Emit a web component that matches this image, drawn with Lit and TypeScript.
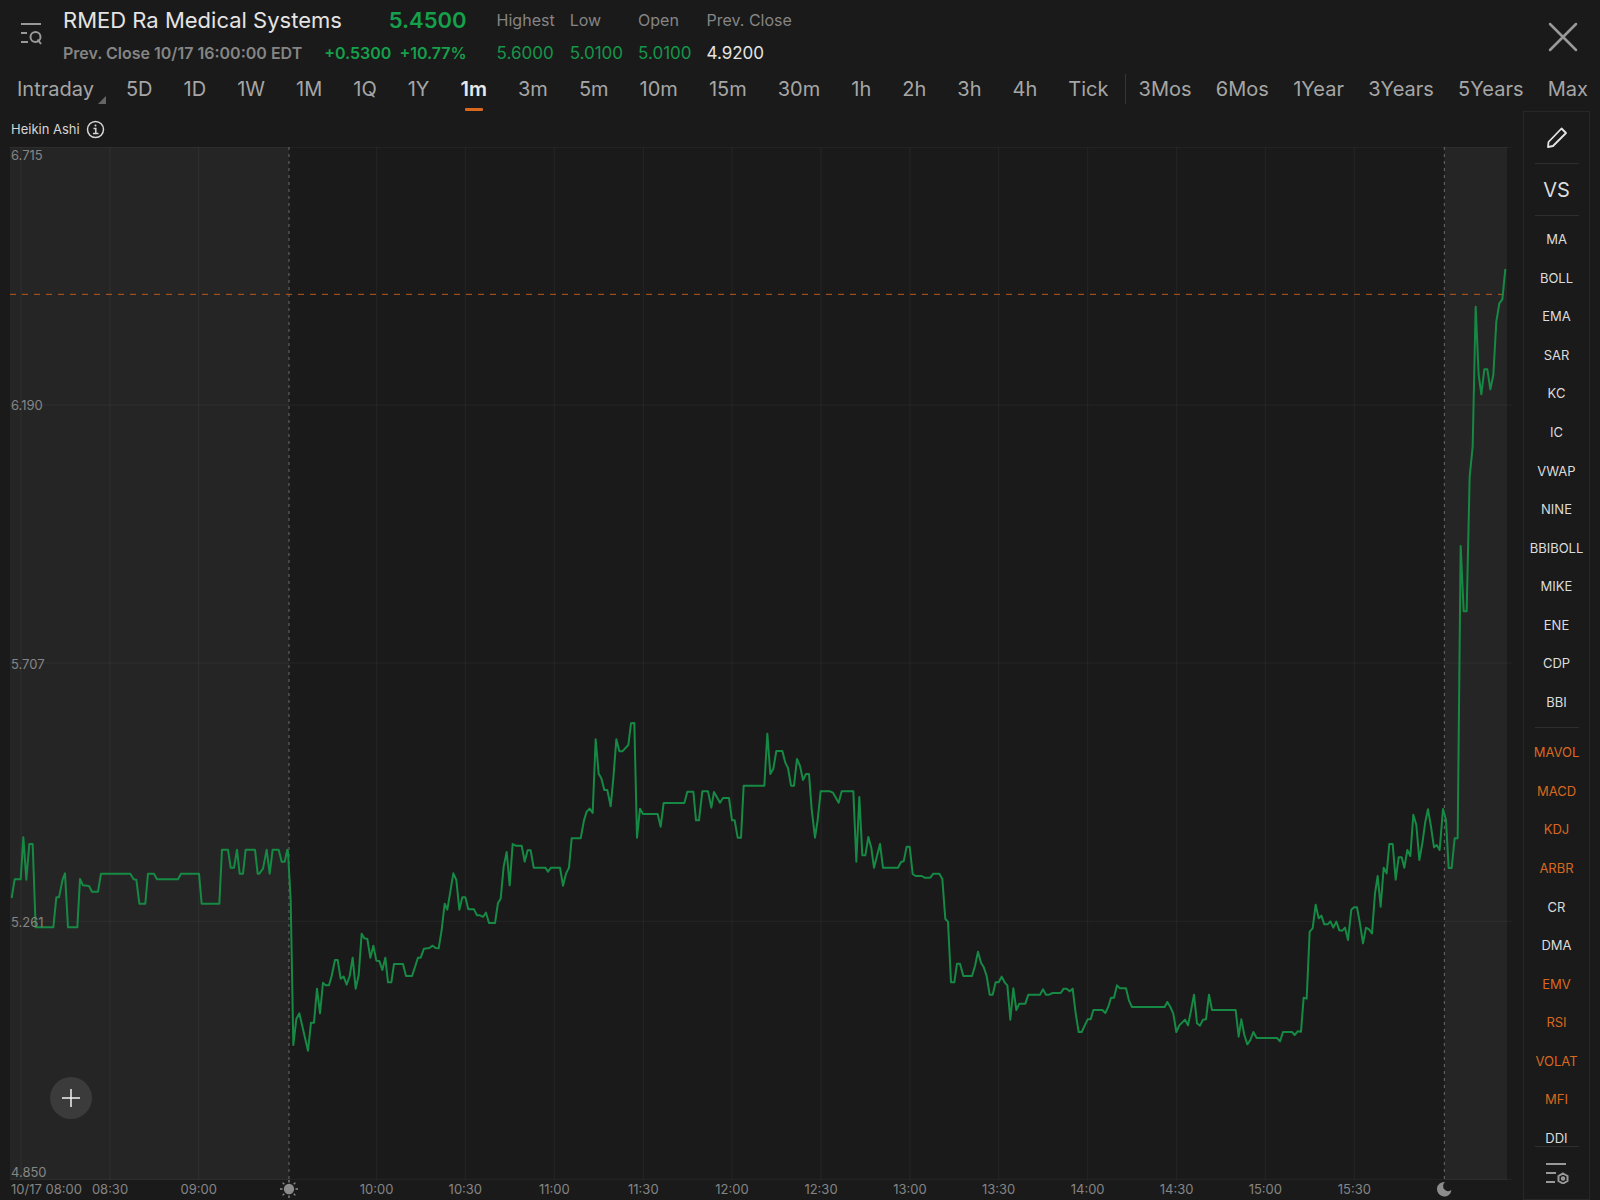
import { LitElement, html, svg, css } from "lit";
import { customElement, state } from "lit/decorators.js";
import { classMap } from "lit/directives/class-map.js";
import { styleMap } from "lit/directives/style-map.js";

/* Plot units: three to a pixel on a wide window; the drawing stretches to its box. */
const PLOT = { left: 30, top: 441, width: 4506, height: 3099 };

/* Price line, stored in stretches: [origin x, origin y, offsets from that origin]. */
const STRETCHES: [number, number, string][] = [
  [0, 2340, "35,354 44,298 62,298 70,172 79,299 88,192 98,192 107,442 160,442 169,352 177,352 188,298 195,280 204,442 232,442 240,297 249,316 267,318 276,335 294,335 303,281 391,281 401,298 409,299 418,371 436,371 444,281 462,281 471,298 534,298 543,281 597,281 605,371 658,371 666,209 684,209 692,263 702,263 711,209 719,281 729,281 737,209 765,209 773,281 778,281 789,266 800,209 809,281 818,209 836,209 845,245 854,245 862,209 864,215 872,360 880,795"],
  [840, 2460, "49,597 58,580 84,692 93,608 102,608 111,506 120,580 129,488 137,496 147,496 155,468 165,420 173,420 182,476 191,470 200,494 209,468 218,413 227,506 236,466 245,341 253,355 262,357 271,413 280,377 289,422 298,423 307,450 316,413 324,487 334,487 342,432 369,432 378,468 396,468 405,441 414,413 422,413 432,386 448,384 458,377 467,384 476,385 485,330 494,251 502,269 511,215 520,160 529,180 538,269 547,232 556,232 565,268 582,268 591,286 600,286 609,291 618,278 627,309 645,309 654,249 662,236 671,140 680,96 689,196 698,72 707,77 725,77 734,125 743,91 752,91 761,143 796,143 804,155 813,143 840,143 849,197 858,161 867,143 875,55 902,55"],
  [1650, 2100, "102,361 110,335 119,326 128,339 137,118 146,221 154,235 163,270 172,270 182,319 190,235 199,118 208,154 217,154 235,135 243,70 253,69 261,413 270,326 279,342 323,342 332,380 341,309 403,309 412,275 430,275 438,361 447,361 457,274 474,274 484,323 492,276 510,308 519,294 537,294 546,361 554,361 563,413 573,413 581,257 643,257 652,101 661,222 670,206 679,153 697,153 706,188 714,204 723,257 732,257 741,177 750,198 759,240 768,222 777,222 785,327 795,413 803,360 812,274 840,274 849,278 866,308 875,274 910,274"],
  [2490, 2280, "79,305 88,111 97,286 106,286 115,231 124,264 132,323 150,252 159,323 204,323 213,306 221,304 230,260 239,260 248,342 257,348 275,348 284,353 301,353 310,341 328,341 337,357 346,477 354,485 363,667 373,667 381,611 390,611 400,648 426,648 435,618 444,575 453,608 461,621 470,648 479,704 488,704 497,667 506,667 515,650 524,667 532,676 541,779 550,685 559,750 568,731 586,731 595,704 630,704 639,688 648,704 657,704 668,699 692,699 701,686 710,686 719,694 728,686 737,760 746,816 755,816 773,778 782,778 790,750 817,750 826,759 835,740 843,713 852,713 861,676 870,685 888,685 897,722 906,741"],
  [3360, 2580, "134,441 142,426 151,441 160,461 169,516 178,496 195,479 204,496 213,452 222,404 231,490 240,497 249,479 258,478 267,404 276,450 347,450 356,530 364,478 373,525 382,553 391,540 400,516 410,534 471,534 480,544 489,516 516,516 524,525 533,514 543,515 551,413 560,416 569,215 578,205 587,134 596,175 604,167 613,193 623,193 631,184 640,203 649,185 658,211 667,212 675,203 684,240 694,149 702,142 711,142 720,191 729,250 738,203 747,208 756,220 765,100 773,48 782,140 791,23"],
  [4110, 2340, "50,280 58,192 68,192 77,299 86,232 95,232 103,263 112,210 121,228 130,104 139,135 148,240 157,190 166,125 174,88 183,140 192,202 200,195 209,210 219,87 228,120 236,264 245,264 254,175 263,175"],
  [4320, 750, "62,888 71,1084 80,1084 89,680 98,590 107,170 116,375 124,433 133,358 142,358 151,418 160,375 169,215 178,160 187,148 196,57"],
];

const PRICE_LINE = STRETCHES.map(([ox, oy, pts]) =>
  pts
    .split(" ")
    .map((p) => {
      const [x, y] = p.split(",").map(Number);
      return `${ox + x},${oy + y}`;
    })
    .join(" "),
).join(" ");

const OPEN_X = 867;
const CLOSE_X = 4333;
const SHADE_END = 4521;
const STEP = 267;
const FIRST_X = 63;

const TIMES = ["10/17 08:00", "08:30", "09:00", "", "10:00", "10:30", "11:00", "11:30", "12:00", "12:30", "13:00", "13:30", "14:00", "14:30", "15:00", "15:30"];
const timeX = (i: number) => FIRST_X + i * STEP - Math.round(i / 3);
const pct = (x: number) => `${(((x - PLOT.left) / PLOT.width) * 100).toFixed(3)}%`;

const PRICES = ["6.715", "6.190", "5.707", "5.261", "4.850"];

const PERIODS = ["5D", "1D", "1W", "1M", "1Q", "1Y", "1m", "3m", "5m", "10m", "15m", "30m", "1h", "2h", "3h", "4h", "Tick"];
const RANGES = ["3Mos", "6Mos", "1Year", "3Years", "5Years", "Max"];

const MAIN_INDICATORS = ["MA", "BOLL", "EMA", "SAR", "KC", "IC", "VWAP", "NINE", "BBIBOLL", "MIKE", "ENE", "CDP", "BBI"];
const SUB_INDICATORS = ["MAVOL", "MACD", "KDJ", "ARBR", "CR", "DMA", "EMV", "RSI", "VOLAT", "MFI", "DDI"];

const STATS: [string, string, boolean][] = [
  ["Highest", "5.6000", true],
  ["Low", "5.0100", true],
  ["Open", "5.0100", true],
  ["Prev. Close", "4.9200", false],
];

const shared = css`
  * {
    box-sizing: border-box;
  }
  button {
    margin: 0;
    padding: 0;
    border: 0;
    background: none;
    color: inherit;
    font: inherit;
    cursor: pointer;
  }
  svg {
    display: block;
  }
`;

@customElement("quote-header")
class QuoteHeader extends LitElement {
  static styles = [
    shared,
    css`
      :host {
        display: flex;
        align-items: flex-start;
        padding: 4px 22px 0 20px;
        line-height: 33px;
        white-space: nowrap;
      }
      .search {
        padding: 18px 21px 0 0;
      }
      .row {
        display: flex;
        justify-content: space-between;
      }
      h1 {
        margin: 0;
        font-size: 22px;
        font-weight: 400;
        color: #e4e4e4;
      }
      .price {
        font-size: 22px;
        font-weight: 600;
      }
      .sub {
        gap: 22px;
        font-size: 16px;
        font-weight: 600;
        color: #858585;
      }
      .change {
        display: flex;
        gap: 8px;
      }
      .up {
        color: #15a04b;
      }
      dl {
        display: flex;
        gap: 15px;
        margin: 0 0 0 30px;
      }
      dt {
        font-size: 16px;
        color: #858585;
      }
      dd {
        margin: 0;
        font-size: 17px;
        color: #e4e4e4;
      }
      dd.up {
        color: #15964a;
      }
      .close {
        margin: 18px 0 0 auto;
      }
    `,
  ];

  render() {
    return html`
      <button class="search" aria-label="Symbol list">
        <svg width="22" height="24" viewBox="0 0 22 24" fill="none" stroke="#999" stroke-width="2">
          <path d="M1 2H21M1 11H7M1 20H8" />
          <circle cx="15.500" cy="15" r="5" />
          <path d="M17.500 17.500L21 22" />
        </svg>
      </button>
      <div>
        <div class="row">
          <h1>RMED Ra Medical Systems</h1>
          <span class="price up">5.4500</span>
        </div>
        <div class="row sub">
          <span>Prev. Close 10/17 16:00:00 EDT</span>
          <span class="change up"><span>+0.5300</span><span>+10.77%</span></span>
        </div>
      </div>
      <dl>
        ${STATS.map(
          ([name, value, up]) => html`<div><dt>${name}</dt><dd class=${classMap({ up })}>${value}</dd></div>`,
        )}
      </dl>
      <button class="close" aria-label="Close">
        <svg width="30" height="30" viewBox="0 0 30 30" stroke="#999" stroke-width="2.500" stroke-linecap="round">
          <path d="M2 2L28 28M28 2L2 28" />
        </svg>
      </button>
    `;
  }
}

@customElement("period-tabs")
class PeriodTabs extends LitElement {
  @state() private active = "1m";

  static styles = [
    shared,
    css`
      :host {
        display: flex;
        height: 41px;
        padding: 0 12px 0 17px;
        font-size: 20px;
        line-height: 38px;
        color: #a6a6a6;
      }
      nav {
        display: flex;
        justify-content: space-between;
      }
      .periods {
        flex: 984;
        margin-left: 20px;
      }
      .ranges {
        flex: 450;
        margin-left: 13px;
      }
      .rule {
        width: 1px;
        height: 30px;
        margin: 4px 0 0 16px;
        background: #363636;
      }
      .intraday {
        display: flex;
        align-items: flex-start;
        gap: 4px;
      }
      .intraday svg {
        margin-top: 26px;
      }
      .tab {
        display: flex;
        flex-direction: column;
        align-items: center;
        justify-content: space-between;
      }
      .tab.on {
        font-weight: 600;
        color: #e8e8e8;
      }
      .tab.on::after {
        content: "";
        width: 18px;
        height: 3px;
        border-radius: 1px;
        background: #d9681f;
      }
    `,
  ];

  private tab(name: string) {
    const on = name === this.active;
    return html`<button class=${classMap({ tab: true, on })} aria-pressed=${on} @click=${() => (this.active = name)}>${name}</button>`;
  }

  render() {
    return html`
      <button class="intraday">
        Intraday
        <svg width="8" height="8" viewBox="0 0 8 8"><path d="M8 0V8H0Z" fill="#666" /></svg>
      </button>
      <nav class="periods" aria-label="Candle period">${PERIODS.map((p) => this.tab(p))}</nav>
      <span class="rule"></span>
      <nav class="ranges" aria-label="Range">${RANGES.map((r) => this.tab(r))}</nav>
    `;
  }
}

@customElement("price-chart")
class PriceChart extends LitElement {
  static styles = [
    shared,
    css`
      :host {
        display: flex;
        flex-direction: column;
        min-width: 0;
        padding: 0 11px 0 10px;
        color: #858585;
        font-size: 13px;
      }
      .caption {
        display: flex;
        align-items: center;
        gap: 6px;
        height: 36px;
        padding-left: 1px;
        color: #d6d6d6;
      }
      .plot {
        position: relative;
        flex: 1;
        min-height: 0;
      }
      .plot > svg {
        position: absolute;
        inset: 0;
        width: 100%;
        height: 100%;
      }
      .plot line,
      .plot polyline {
        vector-effect: non-scaling-stroke;
        fill: none;
      }
      .shade {
        fill: #252525;
      }
      .grid {
        stroke: #fff;
        stroke-opacity: 0.05;
      }
      .session {
        stroke: #6a6a6a;
        stroke-width: 1px;
        stroke-dasharray: 3 4;
      }
      .last {
        stroke: #b85a1e;
        stroke-width: 1px;
        stroke-dasharray: 6 6;
      }
      .line {
        stroke: #168a44;
        stroke-width: 2px;
        stroke-linejoin: round;
      }
      .price {
        position: absolute;
        left: 1px;
        line-height: 16px;
        transform: translateY(-50%);
      }
      .price.first {
        transform: none;
      }
      .price.final {
        transform: translateY(-100%);
      }
      .add {
        position: absolute;
        left: 40px;
        bottom: 61px;
        display: grid;
        place-items: center;
        width: 42px;
        height: 42px;
        border-radius: 50%;
        background: #3b3b3b;
      }
      .times {
        position: relative;
        height: 20px;
        line-height: 18px;
      }
      .times > * {
        position: absolute;
        top: 0;
        transform: translateX(-50%);
      }
      .times > .start {
        left: 1px;
        transform: none;
      }
    `,
  ];

  render() {
    const { left, top, width, height } = PLOT;
    return html`
      <div class="caption">
        Heikin Ashi
        <svg width="19" height="19" viewBox="0 0 19 19" fill="none" stroke="#d6d6d6" stroke-width="1.500">
          <circle cx="9.500" cy="9.500" r="8" />
          <path d="M7.500 8.500H9.800V13.500M7 13.500H12.500" />
          <circle cx="9.500" cy="5.500" r="1" fill="#d6d6d6" stroke="none" />
        </svg>
      </div>
      <div class="plot">
        <svg viewBox="${left} ${top} ${width} ${height}" preserveAspectRatio="none" role="img" aria-label="RMED price">
          <rect class="shade" x=${left} y=${top} width=${OPEN_X - left} height=${height} />
          <rect class="shade" x=${CLOSE_X} y=${top} width=${SHADE_END - CLOSE_X} height=${height} />
          ${[1, 774, 1548, 2323, 3097].map(
            (y) => svg`<line class="grid" x1=${left} x2=${left + width} y1=${top + y} y2=${top + y} />`,
          )}
          ${TIMES.map((t, i) =>
            t ? svg`<line class="grid" x1=${timeX(i)} x2=${timeX(i)} y1=${top} y2=${top + height} />` : null,
          )}
          ${[OPEN_X, CLOSE_X].map(
            (x) => svg`<line class="session" x1=${x} x2=${x} y1=${top} y2=${top + height} />`,
          )}
          <line class="last" x1=${left} x2="4530" y1="883" y2="883" />
          <polyline class="line" points=${PRICE_LINE} />
        </svg>
        ${PRICES.map(
          (p, i) => html`<span
            class=${classMap({ price: true, first: i === 0, final: i === PRICES.length - 1 })}
            style=${styleMap({ top: `${i * 25}%` })}
          >${p}</span>`,
        )}
        <button class="add" aria-label="Add indicator">
          <svg width="18" height="18" viewBox="0 0 18 18" stroke="#f2f2f2" stroke-width="1.500">
            <path d="M9 0V18M0 9H18" />
          </svg>
        </button>
      </div>
      <div class="times">
        ${TIMES.map((t, i) =>
          i === 0
            ? html`<span class="start">${t}</span>`
            : t
              ? html`<span style=${styleMap({ left: pct(timeX(i)) })}>${t}</span>`
              : null,
        )}
        <svg style=${styleMap({ left: pct(OPEN_X) })} width="18" height="18" viewBox="0 0 18 18" stroke="#8c8c8c" stroke-width="1.300">
          <circle cx="9" cy="9" r="4.500" fill="#8c8c8c" />
          <path d="M9 0V2.500M9 15.500V18M0 9H2.500M15.500 9H18M2.600 2.600L4.300 4.300M13.700 13.700L15.400 15.400M2.600 15.400L4.300 13.700M13.700 4.300L15.400 2.600" />
        </svg>
        <svg style=${styleMap({ left: pct(CLOSE_X) })} width="16" height="18" viewBox="0 0 16 18">
          <path d="M9 2A7.300 7.300 0 1 0 15.500 10A5 5 0 0 1 9 2Z" fill="#8c8c8c" />
        </svg>
      </div>
    `;
  }
}

@customElement("indicator-bar")
class IndicatorBar extends LitElement {
  @state() private picked = new Set(["MAVOL", "MACD", "KDJ", "ARBR", "EMV", "RSI", "VOLAT", "MFI"]);

  static styles = [
    shared,
    css`
      :host {
        display: flex;
        flex-direction: column;
        align-items: center;
        min-height: 0;
        border: 1px solid #272727;
        color: #dcdcdc;
        font-size: 13px;
      }
      .tool {
        display: grid;
        place-items: center;
        flex: none;
        width: 44px;
        height: 52px;
        border-bottom: 1px solid #2e2e2e;
      }
      .vs {
        font-size: 20px;
      }
      .list {
        display: flex;
        flex-direction: column;
        flex: 1;
        min-height: 0;
        overflow: hidden;
        width: 100%;
        padding-top: 4px;
      }
      .item {
        flex: 1;
        min-height: 0;
      }
      .item.on {
        color: #d9681f;
      }
      .item:last-child {
        margin-bottom: -11px;
      }
      .rule {
        align-self: center;
        flex: none;
        width: 44px;
        height: 1px;
        margin: 6px 0 5px;
        background: #2e2e2e;
      }
      .settings {
        height: 53px;
        border-top: 1px solid #2e2e2e;
        border-bottom: 0;
      }
    `,
  ];

  private toggle(name: string) {
    const next = new Set(this.picked);
    next.has(name) ? next.delete(name) : next.add(name);
    this.picked = next;
  }

  private item(name: string) {
    const on = this.picked.has(name);
    return html`<button class=${classMap({ item: true, on })} aria-pressed=${on} @click=${() => this.toggle(name)}>${name}</button>`;
  }

  render() {
    return html`
      <button class="tool" aria-label="Draw">
        <svg width="22" height="22" viewBox="0 0 22 22" fill="none" stroke="#e4e4e4" stroke-width="1.800" stroke-linejoin="round">
          <path d="M2 20L2.500 15L15.500 1.500L20 6L7 19Z" />
        </svg>
      </button>
      <button class="tool vs">VS</button>
      <div class="list">
        ${MAIN_INDICATORS.map((n) => this.item(n))}
        <span class="rule"></span>
        ${SUB_INDICATORS.map((n) => this.item(n))}
      </div>
      <button class="tool settings" aria-label="Indicator settings">
        <svg width="24" height="22" viewBox="0 0 24 22" fill="none" stroke="#999" stroke-width="2">
          <path d="M1 2H21M1 11H11M1 20H10" />
          <path d="M18 11.500L22.500 14V19L18 21.500L13.500 19V14Z" />
          <circle cx="18" cy="16.500" r="1.200" />
        </svg>
      </button>
    `;
  }
}

@customElement("app-root")
class AppRoot extends LitElement {
  static styles = [
    shared,
    css`
      :host {
        display: flex;
        flex-direction: column;
        height: 100vh;
        overflow: hidden;
        background: #1a1a1a;
        font-family: Inter, "Liberation Sans", sans-serif;
      }
      main {
        display: grid;
        grid-template-columns: minmax(0, 1fr) 67px;
        grid-template-rows: minmax(0, 1fr);
        flex: 1;
        min-height: 0;
        padding-right: 10px;
      }
    `,
  ];

  render() {
    return html`
      <quote-header></quote-header>
      <period-tabs></period-tabs>
      <main>
        <price-chart></price-chart>
        <indicator-bar></indicator-bar>
      </main>
    `;
  }
}
